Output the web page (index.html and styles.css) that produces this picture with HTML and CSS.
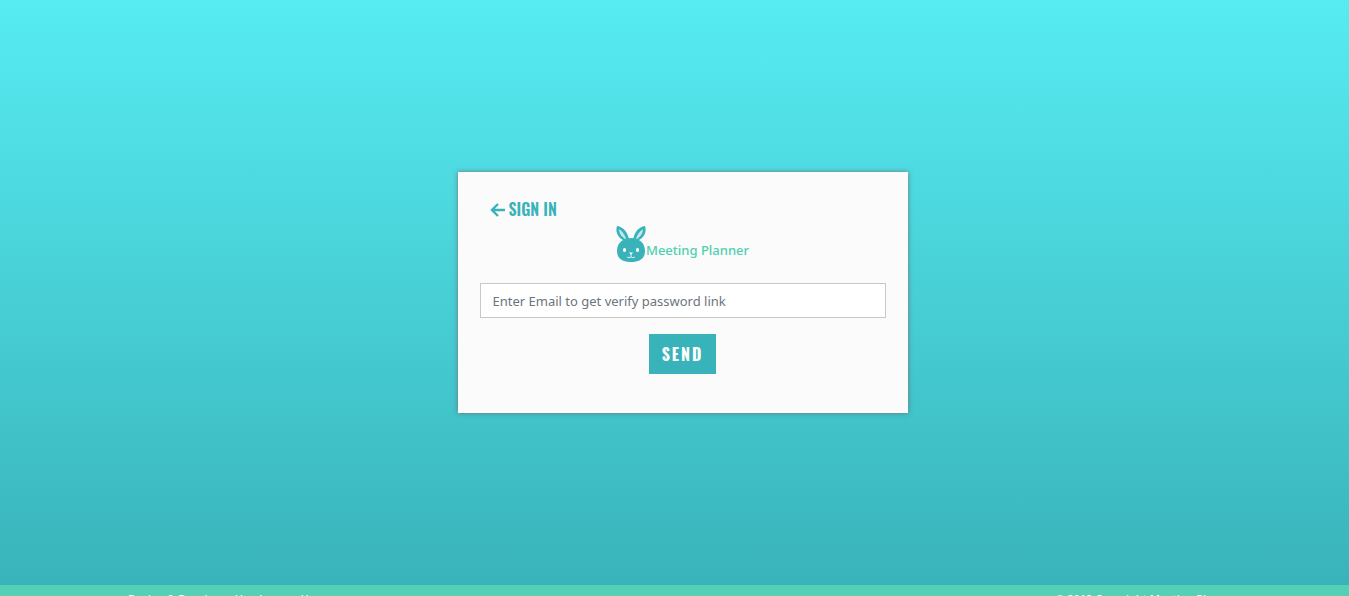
FILE: index.html
```html
<!DOCTYPE html>
<html lang="en">
<head>
<meta charset="utf-8">
<meta name="viewport" content="width=device-width, initial-scale=1">
<title>Meeting Planner</title>
<link rel="stylesheet" href="styles.css">
</head>
<body>
<main class="page">
  <form class="card">
    <a class="back" href="#">
      <svg class="back-icon" viewBox="0 0 16 16" aria-hidden="true"><path d="M8 2 2 8l6 6M2.500 8H15" fill="none" stroke="currentColor" stroke-width="2.400"/></svg>
      <span>SIGN IN</span>
    </a>
    <div class="brand">
      <svg class="brand-icon" viewBox="0 0 30 38" aria-hidden="true">
        <path d="M9 16C2 13-1 7 1 1c7 1 11 7 12 14zM21 16c7-3 10-9 8-15-7 1-11 7-12 14z" fill="#39b3ba"/>
        <path d="M9 14C5 11 3 8 3 4c4 3 6 6 7 10zM21 14c4-3 6-6 6-10-4 3-6 6-7 10z" fill="#c5e8ea"/>
        <path d="M15 13c8 0 14 5 14 13 0 8-6 11-14 11S1 34 1 26c0-8 6-13 14-13z" fill="#39b3ba"/>
        <ellipse cx="8.500" cy="25" rx="1.600" ry="2" fill="#fff"/>
        <ellipse cx="21.500" cy="25" rx="1.600" ry="2" fill="#fff"/>
        <path d="M13 27.500h4l-2 2.500z" fill="#fff"/>
        <path d="M15 29v3M11 32q2 1.500 4 0q2 1.500 4 0" fill="none" stroke="#d5eff0" stroke-width="1"/>
      </svg>
      <span class="brand-name">Meeting Planner</span>
    </div>
    <input class="email" type="email" aria-label="Email" placeholder="Enter Email to get verify password link">
    <button class="send" type="submit">SEND</button>
  </form>
</main>
<footer class="footer">
  <span>Design &amp; Developer Harsheswar H</span>
  <span>© 2019 Copyright Meeting Planner</span>
</footer>
</body>
</html>
```
FILE: styles.css
```css
* { box-sizing: border-box; }
html { height: 100%; overflow: hidden; }
body {
  margin: 0;
  font-family: "Noto Sans", "Open Sans", sans-serif;
}
.page {
  min-height: calc(100vh - 11px);
  display: flex;
  align-items: center;
  justify-content: center;
  padding: 0 0 0 16px;
  background: linear-gradient(#56ecf2, #39b3ba);
}
.card {
  display: flex;
  flex-direction: column;
  width: 450px;
  max-width: 100%;
  padding: 24px 22px 39px;
  background: #fbfbfb;
  box-shadow: 0 0 5px rgba(110, 110, 110, 0.9);
}
.back {
  display: flex;
  align-items: center;
  align-self: flex-start;
  gap: 3px;
  margin-left: 10px;
  color: #39b3ba;
  font: 600 16px/27px "Oswald", "Liberation Sans Narrow", "Roboto Condensed", sans-serif;
  text-decoration: none;
}
.back-icon { width: 16px; height: 16px; }
.brand {
  display: flex;
  align-items: center;
  justify-content: center;
  height: 42px;
  margin-bottom: 18px;
}
.brand-icon { width: 30px; height: 38px; }
.brand-name {
  padding-top: 12px;
  color: #4fd0ae;
  font-size: 13px;
  font-weight: 500;
}
.email {
  width: 100%;
  height: 35px;
  padding: 0 12px;
  border: 1px solid #c8c8c8;
  border-radius: 0;
  background: #fff;
  color: #495057;
  font: 13px "Noto Sans", "Open Sans", sans-serif;
}
.email::placeholder { color: #6c757d; opacity: 1; }
.send {
  align-self: center;
  height: 40px;
  margin-top: 16px;
  padding: 0 13px;
  border: 0;
  background: #39b3ba;
  color: #fff;
  font: bold 16px "Oswald", "Liberation Sans Narrow", "Roboto Condensed", sans-serif;
  letter-spacing: 2px;
}
.footer {
  display: flex;
  justify-content: space-between;
  padding: 6px 112px 6px 128px;
  background: #56cfb8;
  color: #fff;
  font-size: 11px;
  font-weight: 500;
  line-height: 16px;
}
```
